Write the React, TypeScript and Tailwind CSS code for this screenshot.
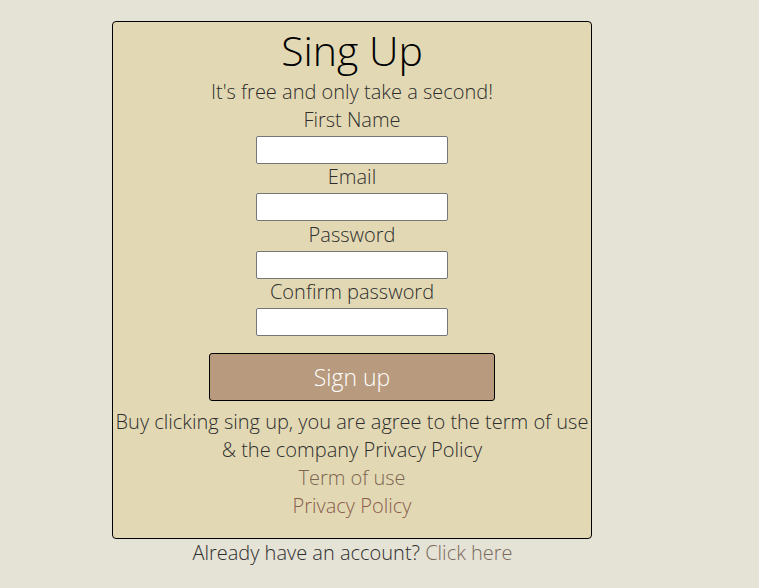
export default function App() {
    const fields = [
        { label: 'First Name', gap: 'mt-[3px]' },
        { label: 'Email', gap: 'mt-[2px]' },
        { label: 'Password', gap: 'mt-[3px]' },
        { label: 'Confirm password', gap: 'mt-[2px]' },
    ];

    return (
        <div className="min-h-screen bg-[#e5e2d6] pt-[21px] font-['Open_Sans',sans-serif] font-light text-[#2e2e2e]">
            <div className="ml-[112px] flex h-[518px] w-[480px] flex-col items-center rounded border border-black bg-[#e2d9b4] pt-[6px]">
                <h1 className="text-[41px] leading-[44px] text-black">Sing Up</h1>
                <p className="mt-[6px] text-[20px] leading-[28px]">It's free and only take a second!</p>

                {fields.map((f) => (
                    <div key={f.label} className={`flex flex-col items-center ${f.gap}`}>
                        <label className="text-[20px] leading-[22px]">{f.label}</label>
                        <input
                            type={f.label.includes('assword') ? 'password' : 'text'}
                            className="mt-[5px] box-border h-[28px] w-[192px] rounded-[2px] border border-[#767676] bg-white"
                        />
                    </div>
                ))}

                <button className="mt-[17px] box-border h-[48px] w-[286px] rounded-[3px] border border-black bg-[#b89a7e] text-[23px] text-white">
                    Sign up
                </button>

                <div className="mt-[7px] flex flex-col items-center whitespace-nowrap text-[20px] leading-[28px]">
                    <p>Buy clicking sing up, you are agree to the term of use</p>
                    <p>&amp; the company Privacy Policy</p>
                    <a className="text-[#7d6552]">Term of use</a>
                    <a className="text-[#8a5c4c]">Privacy Policy</a>
                </div>
            </div>
            <p className="w-[705px] text-center text-[20px] leading-[27px]">
                Already have an account? <a className="text-[#7a6a5c]">Click here</a>
            </p>
        </div>
    );
}
